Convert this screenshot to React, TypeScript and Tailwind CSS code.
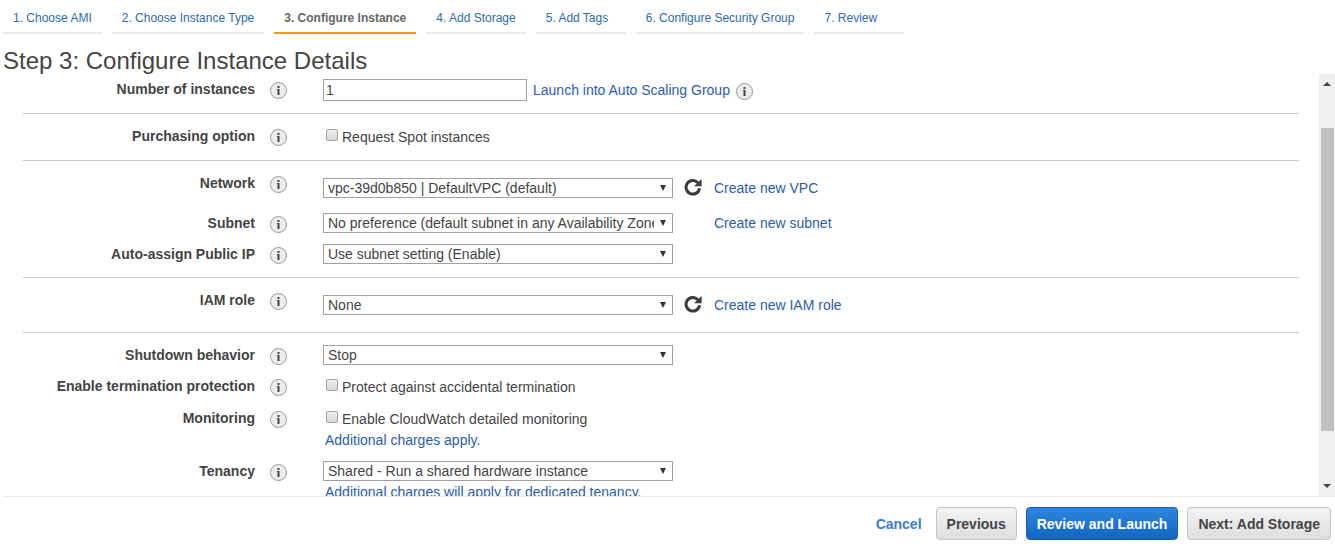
import { useId, type ReactNode } from "react";

const steps = [
  "1. Choose AMI",
  "2. Choose Instance Type",
  "3. Configure Instance",
  "4. Add Storage",
  "5. Add Tags",
  "6. Configure Security Group",
  "7. Review",
];
const currentStep = 2;

function InfoIcon() {
  return (
    <svg viewBox="0 0 17 17" className="size-[17px] shrink-0" aria-hidden="true">
      <circle cx="8.5" cy="8.5" r="8" fill="#ededed" stroke="#999" strokeWidth="1" />
      <rect x="7.5" y="4" width="2" height="2" fill="#444" />
      <path d="M6.8 7h2.7v6h-2V7.8h-.7z" fill="#444" />
    </svg>
  );
}

function RefreshIcon() {
  return (
    <svg viewBox="0 0 18 18" className="size-[18px]" aria-hidden="true">
      <path d="M15.6 10.2A6.8 6.8 0 1 1 13.9 4.7" fill="none" stroke="#3c3c3c" strokeWidth="3" />
      <path d="M17.6 1v7.2H10z" fill="#3c3c3c" />
    </svg>
  );
}

function InfoButton({ about }: { about: string }) {
  return (
    <button type="button" aria-label={`About ${about}`} className="mt-[3px] size-[17px] shrink-0">
      <InfoIcon />
    </button>
  );
}

function Row({ label, id, children }: { label: string; id: string; children: ReactNode }) {
  return (
    <div className="flex items-start">
      <label htmlFor={id} className="w-[232px] shrink-0 text-right font-bold whitespace-nowrap">
        {label}
      </label>
      <div className="mr-9 ml-[15px] flex">
        <InfoButton about={label} />
      </div>
      <div className="min-w-0">{children}</div>
    </div>
  );
}

function SelectRow({
  label,
  value,
  link,
  refresh = false,
  lowered = false,
  note,
}: {
  label: string;
  value: string;
  link?: string;
  refresh?: boolean;
  lowered?: boolean;
  note?: string;
}) {
  const id = useId();
  return (
    <Row label={label} id={id}>
      <div className={lowered ? "flex items-center pt-[5px]" : "flex items-center"}>
        <div className="grid w-[350px] items-center">
          <select
            id={id}
            className="col-start-1 row-start-1 h-5 w-full appearance-none rounded-none border border-[#a0a0a0] bg-white pr-[18px] pl-1 text-sm leading-[18px] text-[#444]"
          >
            <option>{value}</option>
          </select>
          <svg
            viewBox="0 0 6 6"
            className="pointer-events-none col-start-1 row-start-1 mr-[7px] size-[6px] justify-self-end"
            fill="#333"
            aria-hidden="true"
          >
            <path d="M0 0h6L3 6z" />
          </svg>
        </div>
        <div className="ml-[11px] flex h-5 w-[30px] items-start">
          {refresh && (
            <button type="button" aria-label={`Refresh ${label}`} className="block">
              <RefreshIcon />
            </button>
          )}
        </div>
        {link && (
          <a href="#" className="text-[#2a5db0]">
            {link}
          </a>
        )}
      </div>
      {note && <Note>{note}</Note>}
    </Row>
  );
}

function CheckRow({ label, text, note }: { label: string; text: string; note?: string }) {
  const id = useId();
  return (
    <Row label={label} id={id}>
      <div className="flex h-[21px] items-start gap-1 pl-[3px]">
        <input
          id={id}
          type="checkbox"
          className="mt-[3px] size-3 appearance-none rounded-[2px] border border-[#a3a3a3] bg-linear-to-b from-[#eee] to-[#d9d9d9] checked:bg-[#2a5db0]"
        />
        <label htmlFor={id} className="pt-px">
          {text}
        </label>
      </div>
      {note && <Note>{note}</Note>}
    </Row>
  );
}

function Note({ children }: { children: ReactNode }) {
  return (
    <a href="#" className="mt-px block pl-[2px] text-[#2a5db0]">
      {children}
    </a>
  );
}

function ScrollRail() {
  return (
    <div className="flex w-4 shrink-0 flex-col items-center bg-[#f0f0f0]" aria-hidden="true">
      <svg viewBox="0 0 8 4" className="mt-2 mb-[42px] h-1 w-2" fill="#444">
        <path d="M0 4h8L4 0z" />
      </svg>
      <div className="w-[13px] grow-[303] basis-0 bg-[#c1c1c1]" />
      <div className="grow-[53] basis-0" />
      <svg viewBox="0 0 8 4" className="mb-2 h-1 w-2" fill="#444">
        <path d="M0 0h8L4 4z" />
      </svg>
    </div>
  );
}

const greyButton =
  "h-[33px] rounded border border-[#c3c3c3] bg-linear-to-b from-[#f4f4f4] to-[#dedede] px-[10px] text-[#444]";

export default function App() {
  const countId = useId();
  return (
    <div className="flex h-screen flex-col overflow-hidden bg-white font-['Liberation_Sans',Arial,sans-serif] text-sm leading-5 text-[#444]">
      <nav className="flex gap-[10px] px-[3px] text-xs leading-4">
        {steps.map((step, i) => (
          <a
            key={step}
            href="#"
            aria-current={i === currentStep ? "step" : undefined}
            className={
              i === currentStep
                ? "min-w-[90px] border-b-2 border-[#f29a1f] px-[10px] pt-[10px] pb-[6px] font-bold text-[#666]"
                : "min-w-[90px] border-b-2 border-[#eaeaea] px-[10px] pt-[10px] pb-[6px] text-[#2c6cb0]"
            }
          >
            {step}
          </a>
        ))}
      </nav>
      <h1 className="mt-[13px] px-[3px] text-2xl leading-7">Step 3: Configure Instance Details</h1>

      <main className="-mt-px flex min-h-0 grow">
        <form className="min-w-0 grow overflow-hidden pr-5 pl-[23px]">
          <section className="border-b border-[#ccc] pt-[5px] pb-3">
            <Row label="Number of instances" id={countId}>
              <div className="flex items-center">
                <input
                  id={countId}
                  type="text"
                  defaultValue="1"
                  className="h-[22px] w-[204px] border border-[#a0a0a0] px-[2px] text-sm"
                />
                <a href="#" className="mr-[6px] ml-[6px] text-[#2a5db0]">
                  Launch into Auto Scaling Group
                </a>
                <InfoButton about="Auto Scaling Group" />
              </div>
            </Row>
          </section>
          <section className="border-b border-[#ccc] pt-3 pb-[13px]">
            <CheckRow label="Purchasing option" text="Request Spot instances" />
          </section>
          <section className="border-b border-[#ccc] pt-3 pb-[13px]">
            <SelectRow label="Network" value="vpc-39d0b850 | DefaultVPC (default)" link="Create new VPC" refresh lowered />
            <div className="mt-[15px] grid gap-[11px]">
              <SelectRow
                label="Subnet"
                value="No preference (default subnet in any Availability Zone)"
                link="Create new subnet"
              />
              <SelectRow label="Auto-assign Public IP" value="Use subnet setting (Enable)" />
            </div>
          </section>
          <section className="border-b border-[#ccc] pt-3 pb-[17px]">
            <SelectRow label="IAM role" value="None" link="Create new IAM role" refresh lowered />
          </section>
          <section className="grid gap-[11px] pt-3">
            <SelectRow label="Shutdown behavior" value="Stop" />
            <CheckRow label="Enable termination protection" text="Protect against accidental termination" />
            <CheckRow
              label="Monitoring"
              text="Enable CloudWatch detailed monitoring"
              note="Additional charges apply."
            />
            <SelectRow
              label="Tenancy"
              value="Shared - Run a shared hardware instance"
              note="Additional charges will apply for dedicated tenancy."
            />
          </section>
        </form>
        <ScrollRail />
      </main>

      <footer className="ml-[3px] flex h-[61px] shrink-0 items-start justify-end border-t border-[#eaeaea] pt-[10px] pr-1 font-bold">
        <button type="button" className="mr-[14px] h-[33px] text-[#3b7dd8]">
          Cancel
        </button>
        <div className="flex gap-[9px]">
          <button type="button" className={greyButton}>
            Previous
          </button>
          <button
            type="button"
            className="h-[33px] rounded border border-[#1b5fae] bg-linear-to-b from-[#2e86de] to-[#1166c2] px-[10px] text-white"
          >
            Review and Launch
          </button>
          <button type="button" className={greyButton}>
            Next: Add Storage
          </button>
        </div>
      </footer>
    </div>
  );
}
